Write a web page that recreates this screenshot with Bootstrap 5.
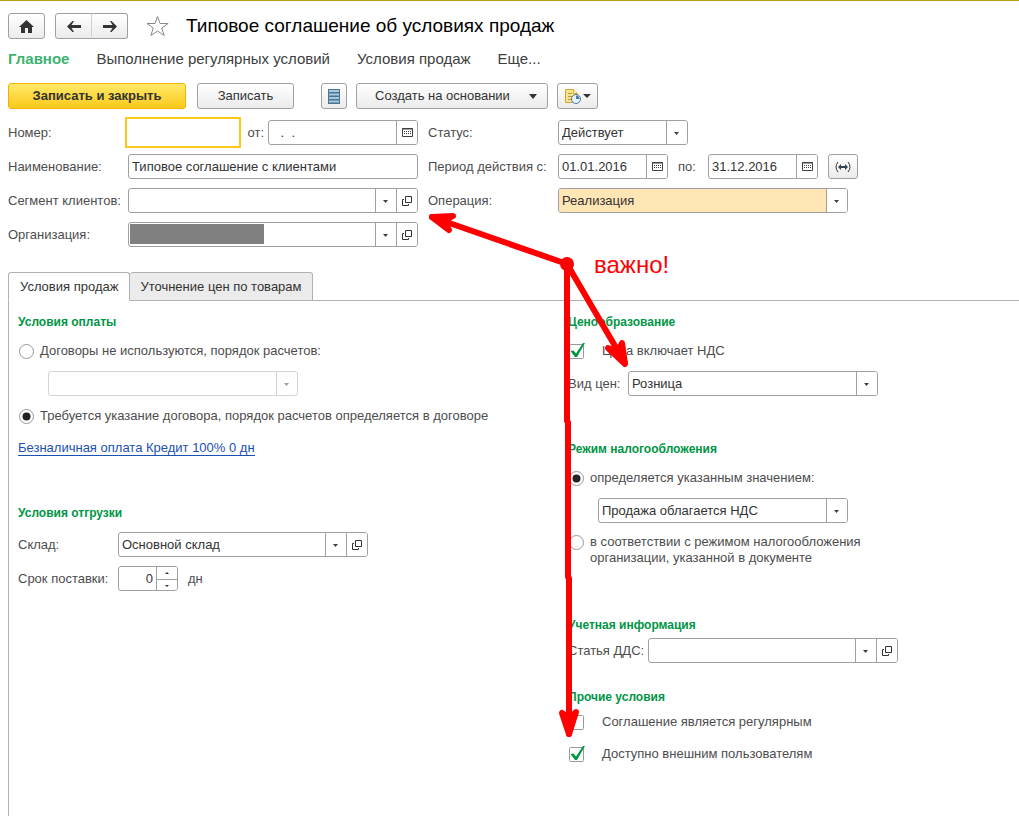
<!DOCTYPE html>
<html lang="ru">
<head>
<meta charset="utf-8">
<meta name="viewport" content="width=device-width, initial-scale=1">
<title>Типовое соглашение об условиях продаж</title>
<link rel="stylesheet" href="https://cdn.jsdelivr.net/npm/bootstrap@5.3.0/dist/css/bootstrap.min.css">
<script src="https://cdn.jsdelivr.net/npm/bootstrap@5.3.0/dist/js/bootstrap.bundle.min.js"></script>
<style>
  :root { --line: #a0a0a0; --ink: #333; --label: #4d4d4d; --green: #009646; }
  body { font: 13px/16px "Liberation Sans", Arial, sans-serif; color: var(--label); background: #fff; }
  .page { min-height: 100vh; border-top: 1px solid #c0a010; }

  .btn-1c {
    --bs-btn-color: var(--ink); --bs-btn-border-color: var(--line); --bs-btn-border-radius: 3px;
    --bs-btn-padding-x: 0; --bs-btn-padding-y: 0; --bs-btn-font-size: 13px; --bs-btn-line-height: 16px;
    --bs-btn-hover-color: #000; --bs-btn-hover-border-color: #808080;
    height: 26px; background: linear-gradient(#fff, #ebebeb);
    display: inline-flex; align-items: center; justify-content: center;
  }
  .btn-main { --bs-btn-border-color: #f0b400; font-weight: 700; background: linear-gradient(#ffe96a, #fbc91a); width: 178px; }
  .w-icon { width: 37px; } .w-save { width: 97px; margin: 0 18px 0 2px; } .w-list { width: 26px; } .w-report { width: 41px; }
  .w-create { width: 192px; justify-content: space-between; padding: 0 10px 0 18px; }
  .w-period { width: 30px; height: 25px; }
  .top-bar { padding: 12px 8px 0; }
  .history { margin-left: 10px; }
  .history .btn + .btn { border-left-color: #d0d0d0; }
  h1 { font-size: 19px; line-height: 24px; color: #000; font-weight: 400; }
  .sections { padding: 8px 8px 0; gap: 27px; font-size: 15px; line-height: 24px; margin-bottom: 12px; }
  .sections .nav-link { padding: 0; color: #404040; }
  .sections .nav-link.active { color: #3cb371; font-weight: 700; }
  .commands { padding: 0 8px; gap: 9px; }

  .head-form { padding: 11px 8px 0; gap: 0 10px; }
  .head-left { width: 410px; } .head-right { min-width: 430px; }
  .line { display: flex; align-items: center; height: 25px; margin-bottom: 9px; }
  .cap-l { width: 120px; } .cap-r { width: 130px; } .cap-s { width: 100px; } .cap-a { width: 80px; } .cap-p { width: 60px; }
  .cap-to { width: 40px; padding-left: 10px; }

  /* framed field with optional side buttons */
  .box { display: flex; height: 25px; border: 1px solid var(--line); border-radius: 3px; background: #fff; overflow: hidden; }
  .box .form-control, .box .form-select {
    flex: 1 1 0; min-width: 0; border: 0; border-radius: 0; padding: 0 3px; min-height: 0; height: 23px;
    font-size: 13px; line-height: 23px; color: var(--ink); background-color: transparent; box-shadow: none;
  }
  .box .form-select {
    padding-right: 24px; background-position: right center; background-size: 21px 23px;
    background-image: url("data:image/svg+xml,%3Csvg xmlns='http://www.w3.org/2000/svg' width='21' height='23'%3E%3Cpath d='M0 0h21v23H0z' fill='%23fff'/%3E%3Cpath d='M.5 0v23' stroke='%23a0a0a0'/%3E%3Cpath d='M8 11h5l-2.500 3z' fill='%23404040'/%3E%3C/svg%3E");
  }
  .box.off { border-color: #d4d4d4; }
  .box.off .form-select {
    background-image: url("data:image/svg+xml,%3Csvg xmlns='http://www.w3.org/2000/svg' width='21' height='23'%3E%3Cpath d='M.5 0v23' stroke='%23d4d4d4'/%3E%3Cpath d='M8 11h5l-2.500 3z' fill='%23a0a0a0'/%3E%3C/svg%3E");
  }
  .side { width: 21px; flex: none; border: 0; border-left: 1px solid var(--line); background: #fff; padding: 0; display: flex; align-items: center; justify-content: center; }
  .box.focused { border-color: transparent; outline: 2px solid #fbc91a; outline-offset: 1px; border-radius: 0; overflow: visible; }
  .box.warm .form-select { background-color: #ffe6b4; }
  .w60 { width: 60px; } .w110 { width: 110px; } .w130 { width: 130px; } .w150 { width: 150px; } .w250 { width: 250px; } .w290 { width: 290px; }
  .redacted { width: 134px; height: 20px; margin: 1px; background: #808080; }
  .spin { border-left: 1px solid var(--line); }
  .spin button { height: 12px; width: 20px; border: 0; background: #fff; padding: 0; display: flex; align-items: center; justify-content: center; }
  .spin button + button { border-top: 1px solid var(--line); }
  input[type=number] { appearance: textfield; text-align: right; }
  input[type=number]::-webkit-inner-spin-button { appearance: none; margin: 0; }

  .tabs-1c { padding-left: 8px; margin-top: 16px; border: 0; }
  .tabs-1c .nav-item { margin: 0; }
  .tabs-1c .nav-link { height: 29px; padding: 0 11px; margin: 0; color: var(--ink); border: 1px solid #b0b0b0; border-radius: 3px 3px 0 0; background: #ebebeb; line-height: 27px; position: relative; }
  .tabs-1c .nav-link.active { color: var(--ink); background: #fff; border-color: #b0b0b0; border-bottom-color: #fff; z-index: 1; }
  .tabs-1c .nav-item + .nav-item .nav-link { border-left: 0; padding: 0 10px; }
  .pane { margin: -1px 0 0 8px; border: 1px solid #b0b0b0; border-width: 1px 0 0 1px; display: grid; grid-template-columns: minmax(0, 550px) 1fr; padding: 12px 0 0 9px; min-height: 516px; }
  h2 { font: 700 12px/18px "Liberation Sans", Arial, sans-serif; color: var(--green); margin: 0 0 4px; }
  .tick { height: 32px; display: flex; align-items: center; margin: 0 0 4px; }
  .tick .form-check-input { margin: 0; float: none; flex: none; border: 0; background-color: transparent; border-radius: 0; width: 17px; height: 17px; background-size: 17px 17px; box-shadow: none; }
  .tick input[type=radio] { background-image: url("data:image/svg+xml,%3Csvg xmlns='http://www.w3.org/2000/svg' width='17' height='17'%3E%3Ccircle cx='8.500' cy='8.500' r='7' fill='%23fff' stroke='%23999'/%3E%3C/svg%3E"); }
  .tick input[type=radio]:checked { background-image: url("data:image/svg+xml,%3Csvg xmlns='http://www.w3.org/2000/svg' width='17' height='17'%3E%3Ccircle cx='8.500' cy='8.500' r='7' fill='%23fff' stroke='%23999'/%3E%3Ccircle cx='8.500' cy='8.500' r='4' fill='%23222'/%3E%3C/svg%3E"); }
  .tick input[type=checkbox] { background-image: url("data:image/svg+xml,%3Csvg xmlns='http://www.w3.org/2000/svg' width='17' height='17'%3E%3Crect x='1.500' y='1.500' width='14' height='14' rx='1' fill='%23fff' stroke='%23999'/%3E%3C/svg%3E"); }
  .tick input[type=checkbox]:checked { background-image: url("data:image/svg+xml,%3Csvg xmlns='http://www.w3.org/2000/svg' width='17' height='17'%3E%3Crect x='1.500' y='1.500' width='14' height='14' rx='1' fill='%23fff' stroke='%23999'/%3E%3Cpath d='M2.500 8L5.500 7.500l2.500 3L15 0h2L9 14H7z' fill='%23009646'/%3E%3C/svg%3E"); }
  .tick label { margin-left: 5px; }
  .tick .far { margin-left: 17px; }
  .tick.two-line { align-items: flex-start; margin: 11px 0 0; }
  .sub { margin-left: 30px; }
  .doc-link { display: inline-block; margin-top: 4px; color: #1a4fb4; text-decoration: none; border-bottom: 1px solid #1a4fb4; line-height: 15px; }
  .gap-s { margin-top: 25px; } .gap-m { margin-top: 44px; } .gap-l { margin-top: 50px; }
  .ship { margin: 48px 0 10px; }
  .notes { position: absolute; left: 0; top: -1px; pointer-events: none; z-index: 5; }
</style>
</head>
<body>
<svg class="d-none">
  <symbol id="i-cal" viewBox="0 0 11 9"><path d="M.5.5h10v8H.5z" fill="none" stroke="#404040"/><path d="M2 3.500h7M2 5.500h7" stroke="#404040" stroke-dasharray="1 1"/><path d="M0 1h11" stroke="#404040"/></symbol>
  <symbol id="i-open" viewBox="0 0 10 10"><path d="M3.500.5h6v6h-6zM2 3.500H.5v6h6V8" fill="none" stroke="#333"/></symbol>
</svg>

<div class="page position-relative">
  <header class="top-bar d-flex align-items-center">
    <button class="btn btn-1c w-icon" type="button" aria-label="Начальная страница"><svg width="15" height="13"><path d="M7.500 0L15 7h-2v6H9V8H6v5H2V7H0z" fill="#333"/></svg></button>
    <div class="btn-group history">
      <button class="btn btn-1c w-icon" type="button" aria-label="Назад"><svg width="14" height="11"><path d="M0 5.500L5.500 0H7L4.500 4H14v3H4.500L7 11H5.500z" fill="#333"/></svg></button>
      <button class="btn btn-1c w-icon" type="button" aria-label="Вперед"><svg width="14" height="11"><path d="M14 5.500L8.500 0H7l2.500 4H0v3h9.500L7 11h1.500z" fill="#333"/></svg></button>
    </div>
    <svg class="ms-3" width="26" height="22"><path d="M13.500 1.500l2.600 7h8l-6.400 4.500 2.500 7.500-6.700-4.500-6.700 4.500 2.500-7.500L3 8.500h8z" fill="#fff" stroke="#888"/></svg>
    <h1 class="mb-0 ms-3">Типовое соглашение об условиях продаж</h1>
  </header>

  <nav class="nav sections">
    <a class="nav-link active" href="#">Главное</a>
    <a class="nav-link" href="#">Выполнение регулярных условий</a>
    <a class="nav-link" href="#">Условия продаж</a>
    <a class="nav-link" href="#">Еще...</a>
  </nav>

  <div class="commands d-flex">
    <button class="btn btn-1c btn-main" type="button">Записать и закрыть</button>
    <button class="btn btn-1c w-save" type="button">Записать</button>
    <button class="btn btn-1c w-list" type="button" aria-label="Список"><svg width="12" height="15"><path d="M0 0h12v15H0z" fill="#4d7590"/><path d="M1 2h10M1 5.500h10M1 9h10M1 12.500h10" stroke="#a5c8e0" stroke-width="2"/></svg></button>
    <button class="btn btn-1c w-create" type="button">Создать на основании<svg width="8" height="5"><path d="M0 0h8L4 5z" fill="#333"/></svg></button>
    <button class="btn btn-1c w-report" type="button" aria-label="Отчеты"><svg width="26" height="16"><path d="M.5 1.500h8l4 4v9h-12z" fill="#f8e08c" stroke="#d0a838"/><path d="M8.500 1.500v4h4" fill="#fff5c8" stroke="#d0a838"/><path d="M3 5.500h4M3 8.500h5M3 11.500h4" stroke="#c09a38"/><circle cx="11" cy="11" r="4.500" fill="#e5f3fb" stroke="#4d7ba5"/><path d="M11 11V7.500a3.500 3.500 0 0 1 3.500 3.500z" fill="#4d7ba5"/><path d="M18 6h8l-4 4z" fill="#333"/></svg></button>
  </div>

  <form class="head-form d-flex">
    <div class="head-left">
      <div class="line"><label class="cap-l" for="num">Номер:</label><div class="box focused w110"><input class="form-control" id="num"></div><label class="ms-auto" for="dt">от:</label><div class="box w150 ms-1"><input class="form-control ps-2" id="dt" value=" .  ."><button class="side" type="button" aria-label="Календарь"><svg width="11" height="9"><use href="#i-cal"/></svg></button></div></div>
      <div class="line"><label class="cap-l" for="nm">Наименование:</label><div class="box w290"><input class="form-control" id="nm" value="Типовое соглашение с клиентами"></div></div>
      <div class="line"><label class="cap-l" for="seg">Сегмент клиентов:</label><div class="box w290"><select class="form-select" id="seg"><option></option></select><button class="side" type="button" aria-label="Открыть"><svg width="10" height="10"><use href="#i-open"/></svg></button></div></div>
      <div class="line"><label class="cap-l" for="org">Организация:</label><div class="box w290"><div class="redacted"></div><select class="form-select" id="org"><option></option></select><button class="side" type="button" aria-label="Открыть"><svg width="10" height="10"><use href="#i-open"/></svg></button></div></div>
    </div>
    <div class="head-right">
      <div class="line"><label class="cap-r" for="st">Статус:</label><div class="box w130"><select class="form-select" id="st"><option>Действует</option></select></div></div>
      <div class="line"><label class="cap-r" for="d1">Период действия с:</label><div class="box w110"><input class="form-control" id="d1" value="01.01.2016"><button class="side" type="button" aria-label="Календарь"><svg width="11" height="9"><use href="#i-cal"/></svg></button></div><label class="cap-to" for="d2">по:</label><div class="box w110"><input class="form-control" id="d2" value="31.12.2016"><button class="side" type="button" aria-label="Календарь"><svg width="11" height="9"><use href="#i-cal"/></svg></button></div><button class="btn btn-1c w-period ms-auto" type="button" aria-label="Выбрать период"><svg width="16" height="12"><path d="M3 1Q-1 6 3 11M13 1q4 5 0 10" fill="none" stroke="#333"/><path d="M3 6l3-3v2h4V3l3 3-3 3V7H6v2z" fill="#345"/></svg></button></div>
      <div class="line"><label class="cap-r" for="op">Операция:</label><div class="box warm w290"><select class="form-select" id="op"><option>Реализация</option></select></div></div>
    </div>
  </form>

  <ul class="nav nav-tabs tabs-1c">
    <li class="nav-item"><a class="nav-link active" href="#">Условия продаж</a></li>
    <li class="nav-item"><a class="nav-link" href="#">Уточнение цен по товарам</a></li>
  </ul>

  <form class="pane">
    <div>
      <h2>Условия оплаты</h2>
      <div class="tick"><input class="form-check-input" type="radio" name="pay" id="p1"><label for="p1">Договоры не используются, порядок расчетов:</label></div>
      <div class="box off w250 sub mb-1"><select class="form-select" aria-label="Порядок расчетов" disabled><option></option></select></div>
      <div class="tick"><input class="form-check-input" type="radio" name="pay" id="p2" checked><label for="p2">Требуется указание договора, порядок расчетов определяется в договоре</label></div>
      <a class="doc-link" href="#">Безналичная оплата Кредит 100% 0 дн</a>
      <h2 class="ship">Условия отгрузки</h2>
      <div class="line"><label class="cap-s" for="wh">Склад:</label><div class="box w250"><select class="form-select" id="wh"><option>Основной склад</option></select><button class="side" type="button" aria-label="Открыть"><svg width="10" height="10"><use href="#i-open"/></svg></button></div></div>
      <div class="line"><label class="cap-s" for="term">Срок поставки:</label><div class="box w60"><input class="form-control" type="number" id="term" value="0"><div class="spin"><button type="button" aria-label="Больше"><svg width="4" height="2"><path d="M0 2l2-2 2 2z" fill="#333"/></svg></button><button type="button" aria-label="Меньше"><svg width="4" height="2"><path d="M0 0h4L2 2z" fill="#333"/></svg></button></div></div><span class="cap-to">дн</span></div>
    </div>
    <div>
      <h2>Ценообразование</h2>
      <div class="tick"><input class="form-check-input" type="checkbox" id="c1" checked><label class="far" for="c1">Цена включает НДС</label></div>
      <div class="line"><label class="cap-p" for="pr">Вид цен:</label><div class="box w250"><select class="form-select" id="pr"><option>Розница</option></select></div></div>
      <h2 class="gap-m">Режим налогообложения</h2>
      <div class="tick"><input class="form-check-input" type="radio" name="tax" id="t1" checked><label for="t1">определяется указанным значением:</label></div>
      <div class="box w250 sub"><select class="form-select" aria-label="Налогообложение"><option>Продажа облагается НДС</option></select></div>
      <div class="tick two-line"><input class="form-check-input" type="radio" name="tax" id="t2"><label for="t2">в соответствии с режимом налогообложения<br>организации, указанной в документе</label></div>
      <h2 class="gap-l">Учетная информация</h2>
      <div class="line"><label class="cap-a" for="dds">Статья ДДС:</label><div class="box w250"><select class="form-select" id="dds"><option></option></select><button class="side" type="button" aria-label="Открыть"><svg width="10" height="10"><use href="#i-open"/></svg></button></div></div>
      <h2 class="gap-s mb-0">Прочие условия</h2>
      <div class="tick mb-0"><input class="form-check-input" type="checkbox" id="c2"><label class="far" for="c2">Соглашение является регулярным</label></div>
      <div class="tick"><input class="form-check-input" type="checkbox" id="c3" checked><label class="far" for="c3">Доступно внешним пользователям</label></div>
    </div>
  </form>

  <!-- red annotation arrows over the form -->
  <svg class="notes" width="700" height="745" fill="none" stroke="#f00" stroke-width="6" stroke-linecap="round" stroke-linejoin="round">
    <circle cx="567" cy="264" r="4" fill="#f00"/>
    <path d="M567 264L432 217"/><path d="M453 216L432 217L449 230L444 221z" fill="#f00"/>
    <path d="M567 264L625 363"/><path d="M608 348L625 364L622 343L618 351z" fill="#f00"/>
    <path d="M567 264V421L568 422V577L569 578V734"/><path d="M562 713L569 734L576 712L569 718z" fill="#f00"/>
    <text x="594" y="273" font-size="24" fill="#f00" stroke="none">важно!</text>
  </svg>
</div>
</body>
</html>
